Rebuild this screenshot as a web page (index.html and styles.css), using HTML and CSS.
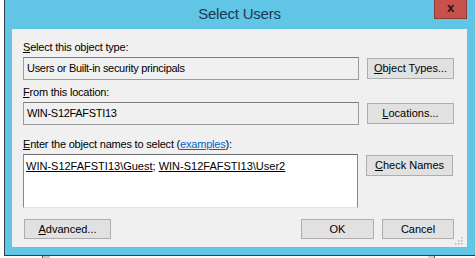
FILE: index.html
```html
<!DOCTYPE html>
<html>
<head>
<meta charset="utf-8">
<link rel="stylesheet" href="styles.css">
</head>
<body>
<div class="window">
  <div class="titlebar">
    <span class="title">Select Users</span>
    <div class="close">x</div>
  </div>
  <div class="client">
    <div class="label first"><u>S</u>elect this object type:</div>
    <div class="row">
      <div class="field">Users or Built-in security principals</div>
      <div class="btn"><u>O</u>bject Types...</div>
    </div>
    <div class="label second"><u>F</u>rom this location:</div>
    <div class="row">
      <div class="field">WIN-S12FAFSTI13</div>
      <div class="btn"><u>L</u>ocations...</div>
    </div>
    <div class="label third"><u>E</u>nter the object names to select (<a class="link">examples</a>):</div>
    <div class="row">
      <div class="names"><u>WIN-S12FAFSTI13\Guest</u>; <u>WIN-S12FAFSTI13\User2</u></div>
      <div class="btn"><u>C</u>heck Names</div>
    </div>
    <div class="footer">
      <div class="btn adv"><u>A</u>dvanced...</div>
      <div class="actions">
        <div class="btn ok">OK</div>
        <div class="btn cancel">Cancel</div>
      </div>
    </div>
    <svg class="grip" width="8" height="8" viewBox="0 0 8 8">
      <rect x="6" y="0" width="1.5" height="1.5" fill="#b8b8b8"/>
      <rect x="3" y="3" width="1.5" height="1.5" fill="#b8b8b8"/>
      <rect x="6" y="3" width="1.5" height="1.5" fill="#b8b8b8"/>
      <rect x="0" y="6" width="1.5" height="1.5" fill="#b8b8b8"/>
      <rect x="3" y="6" width="1.5" height="1.5" fill="#b8b8b8"/>
      <rect x="6" y="6" width="1.5" height="1.5" fill="#b8b8b8"/>
    </svg>
  </div>
</div>
<div class="below">
  <div class="below-a"></div>
  <div class="below-b"></div>
</div>
</body>
</html>
```
FILE: styles.css
```css
html, body {
  margin: 0;
  padding: 0;
  background: #ffffff;
  overflow: hidden;
  width: 475px;
  height: 258px;
}
body {
  font-family: "Liberation Sans", Arial, sans-serif;
  font-size: 11px;
  color: #000;
}
.window {
  position: relative;
  margin-left: 4px;
  width: 471px;
  height: 256px;
  background: #61c5e6;
  border-left: 1px solid #2d3e4c;
  border-bottom: 1px solid #2d3e4c;
  padding: 0 8px 8px 7px;
  box-sizing: border-box;
  display: flex;
  flex-direction: column;
}
.titlebar {
  height: 29px;
  display: flex;
  align-items: center;
  justify-content: center;
  flex: none;
}
.title {
  font-size: 15px;
  letter-spacing: -0.2px;
  color: #1a3850;
  margin-top: -2px;
}
.close {
  position: absolute;
  top: 0;
  right: 8px;
  width: 33px;
  height: 19px;
  background: #c7514c;
  color: #1a1a1a;
  font-weight: bold;
  font-size: 13px;
  line-height: 15px;
  text-align: center;
  box-sizing: border-box;
  border: 1px solid #8e3a36;
  border-top: none;
}
.client {
  position: relative;
  flex: 1;
  background: #f0f0f0;
  padding: 0 13px 0 11px;
  display: flex;
  flex-direction: column;
}
.label {
  line-height: 15px;
  height: 15px;
  margin-bottom: 2px;
  letter-spacing: -0.2px;
}
.label.first { margin-top: 11px; }
.label.second { margin-top: 5px; }
.label.third { margin-top: 12px; }
.link {
  color: #0066cc;
  text-decoration: underline;
}
.row {
  display: flex;
  gap: 8px;
  align-items: flex-start;
}
.field {
  width: 336px;
  height: 23px;
  box-sizing: border-box;
  border: 1px solid #9a9a9a;
  border-top-color: #7e7e7e;
  padding-left: 3px;
  line-height: 21px;
  background: #f0f0f0;
  letter-spacing: -0.3px;
}
.btn {
  width: 87px;
  height: 21px;
  box-sizing: border-box;
  border: 1px solid #adadad;
  background: #e1e1e1;
  text-align: center;
  line-height: 19px;
  margin-top: 1px;
}
.names {
  width: 335px;
  height: 54px;
  box-sizing: border-box;
  background: #ffffff;
  border: 1px solid #8a8a8a;
  border-top-color: #6e6e6e;
  border-bottom-color: #e4e4e4;
  padding: 4px 0 0 2px;
  line-height: 14px;
}
.footer {
  margin-top: 11px;
  display: flex;
  justify-content: space-between;
}
.footer .btn { margin-top: 0; height: 20px; line-height: 18px; }
.btn.adv { margin-left: 1px; }
.actions {
  display: flex;
  gap: 8px;
}
.btn.ok { width: 73px; }
.btn.cancel { width: 72px; }
.grip {
  position: absolute;
  right: 4px;
  bottom: 2px;
}
.below {
  height: 2px;
  display: flex;
  justify-content: space-between;
  padding: 0 40px 0 42px;
}
.below-a {
  width: 7px;
  background: #c8c8c8;
  border-left: 1px solid #555;
}
.below-b {
  width: 6px;
  background: #d0d0d0;
  border-right: 1px solid #555;
}
```
